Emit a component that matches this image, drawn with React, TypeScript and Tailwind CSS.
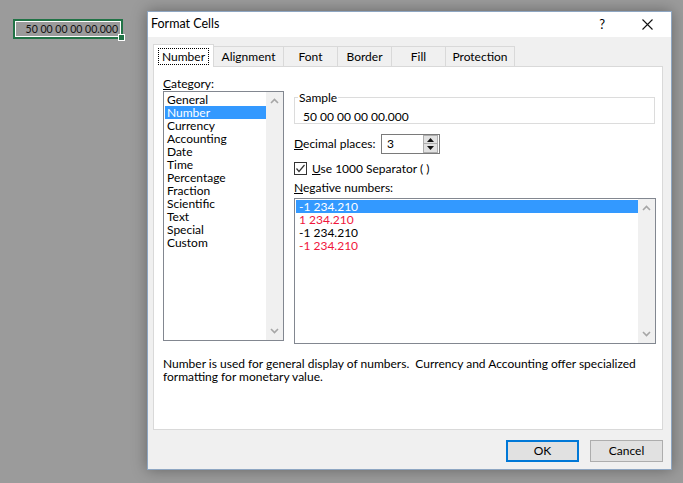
import React from 'react';

const categories = [
    'General', 'Number', 'Currency', 'Accounting', 'Date', 'Time',
    'Percentage', 'Fraction', 'Scientific', 'Text', 'Special', 'Custom'
];

const negatives = [
    { text: '-1 234.210', red: false },
    { text: '1 234.210', red: true },
    { text: '-1 234.210', red: false },
    { text: '-1 234.210', red: true }
];

const tabs = [
    { label: 'Number', w: 'w-[61px]' },
    { label: 'Alignment', w: 'w-[70px]' },
    { label: 'Font', w: 'w-[54px]' },
    { label: 'Border', w: 'w-[54px]' },
    { label: 'Fill', w: 'w-[54px]' },
    { label: 'Protection', w: 'w-[69px]' }
];

function Chevron({ up }: { up?: boolean }) {
    return (
        <svg width="9" height="6" viewBox="0 0 9 6">
            <polyline
                points={up ? '1,5 4.5,1.5 8,5' : '1,1 4.5,4.5 8,1'}
                fill="none"
                stroke="#a6a6a6"
                strokeWidth="1.6"
            />
        </svg>
    );
}

function ScrollBar() {
    return (
        <div className="w-[17px] h-full bg-[#f0f0f0] flex flex-col justify-between items-center pt-[6px] pb-[6px]">
            <Chevron up />
            <Chevron />
        </div>
    );
}

function Cell() {
    return (
        <div className="relative ml-[13px] mt-[19px] w-[110px] h-[20px] border-2 border-[#217346]">
            <div className="w-full h-full border border-white flex items-center justify-end pr-[2px] text-[10.5px] text-[#111] leading-none whitespace-nowrap">
                50 00 00 00 00.000
            </div>
            <div className="absolute -right-[4px] -bottom-[4px] w-[7px] h-[7px] bg-[#217346] border border-white" />
        </div>
    );
}

export default function App() {
    return (
        <div
            className="w-[683px] h-[483px] bg-[#9b9b9b] flex items-start overflow-hidden text-[12px] text-black"
            style={{ fontFamily: '"Segoe UI", Lato, "Noto Sans", Arial, sans-serif' }}
        >
            <Cell />

            <div className="ml-[24px] mt-[11px] w-[525px] h-[459px] border border-[#8ea6c2] bg-[#f0f0f0] flex flex-col shadow-[0_0_14px_rgba(0,0,0,0.35)]">
                {/* title bar */}
                <div className="h-[25px] bg-white flex items-center pl-[3px] pr-[18px]">
                    <span className="flex-1 text-[12.5px]">Format Cells</span>
                    <span className="text-[13px] mr-[37px]">?</span>
                    <svg width="11" height="11" viewBox="0 0 11 11">
                        <path d="M0.5 0.5 L10.5 10.5 M10.5 0.5 L0.5 10.5" stroke="#111" strokeWidth="1.1" />
                    </svg>
                </div>

                <div className="flex-1 flex flex-col pl-[5px] pr-[8px] pt-[7px]">
                    {/* tabs */}
                    <div className="flex items-end h-[22px]">
                        {tabs.map((t, i) =>
                            i === 0 ? (
                                <div
                                    key={t.label}
                                    className={`${t.w} h-[23px] -mb-px relative z-10 bg-white border border-b-0 border-[#d9d9d9] flex items-center justify-center`}
                                >
                                    <span className="px-[3px] leading-[15px] border border-dotted border-black">{t.label}</span>
                                </div>
                            ) : (
                                <div
                                    key={t.label}
                                    className={`${t.w} h-[20px] bg-[#f0f0f0] border border-l-0 border-b-0 border-[#d9d9d9] flex items-center justify-center`}
                                >
                                    {t.label}
                                </div>
                            )
                        )}
                    </div>

                    {/* panel */}
                    <div className="w-[510px] h-[364px] bg-white border border-[#d9d9d9] flex flex-col pl-[9px] pt-[9px]">
                        <div className="flex items-start gap-[10px]">
                            <div className="w-[121px] flex flex-col">
                                <div className="h-[15px] leading-[15px]">
                                    <span className="underline">C</span>ategory:
                                </div>
                                <div className="h-[250px] border border-[#828790] flex">
                                    <div className="flex-1 pl-px pt-px">
                                        {categories.map((c) => (
                                            <div
                                                key={c}
                                                className={`h-[13px] leading-[13px] pl-[2px] ${c === 'Number' ? 'bg-[#3399ff] text-white' : ''}`}
                                            >
                                                {c}
                                            </div>
                                        ))}
                                    </div>
                                    <ScrollBar />
                                </div>
                            </div>

                            <div className="w-[362px] flex flex-col pt-[21px]">
                                <div className="h-[27px] w-[361px] border border-[#dcdcdc] flex flex-col">
                                    <span className="-mt-[8px] ml-[3px] px-px w-fit bg-white leading-[15px]">Sample</span>
                                    <span className="mt-[4px] pl-[8px] leading-[15px]">50 00 00 00 00.000</span>
                                </div>

                                <div className="mt-[10px] flex items-center h-[20px]">
                                    <span className="w-[87px] whitespace-nowrap">
                                        <span className="underline">D</span>ecimal places:
                                    </span>
                                    <div className="w-[59px] h-[20px] border border-[#7a7a7a] flex items-center">
                                        <span className="flex-1 pl-[5px]">3</span>
                                        <div className="w-[15px] h-[18px] mr-px flex flex-col">
                                            <div className="h-[9px] bg-[#e1e1e1] border border-[#adadad] flex items-center justify-center">
                                                <svg width="7" height="4" viewBox="0 0 7 4">
                                                    <polygon points="0,4 3.5,0 7,4" fill="#111" />
                                                </svg>
                                            </div>
                                            <div className="h-[9px] bg-[#e1e1e1] border border-t-0 border-[#adadad] flex items-center justify-center">
                                                <svg width="7" height="4" viewBox="0 0 7 4">
                                                    <polygon points="0,0 3.5,4 7,0" fill="#111" />
                                                </svg>
                                            </div>
                                        </div>
                                    </div>
                                </div>

                                <div className="mt-[8px] h-[13px] flex items-center">
                                    <div className="w-[13px] h-[13px] border border-[#333] flex items-center justify-center">
                                        <svg width="11" height="11" viewBox="0 0 11 11">
                                            <polyline points="1.5,5.5 4,8.5 9.5,2" fill="none" stroke="#333" strokeWidth="1.2" />
                                        </svg>
                                    </div>
                                    <span className="ml-[5px] whitespace-nowrap">
                                        <span className="underline">U</span>se 1000 Separator ( )
                                    </span>
                                </div>

                                <div className="mt-[5px] h-[15px] leading-[15px]">
                                    <span className="underline">N</span>egative numbers:
                                </div>

                                <div className="mt-[3px] h-[146px] w-[362px] border border-[#828790] flex">
                                    <div className="flex-1 pl-px pt-px">
                                        {negatives.map((n, i) => (
                                            <div
                                                key={i}
                                                className={`h-[13px] leading-[13px] pl-[3px] ${
                                                    i === 0 ? 'bg-[#3399ff] text-white' : n.red ? 'text-[#f0163c]' : ''
                                                }`}
                                            >
                                                {n.text}
                                            </div>
                                        ))}
                                    </div>
                                    <ScrollBar />
                                </div>
                            </div>
                        </div>

                        <div className="mt-[13px] leading-[13px] whitespace-nowrap">
                            <div>Number is used for general display of numbers.&nbsp; Currency and Accounting offer specialized</div>
                            <div>formatting for monetary value.</div>
                        </div>
                    </div>

                    {/* buttons */}
                    <div className="mt-[10px] flex justify-end gap-[11px] w-[510px]">
                        <button className="w-[73px] h-[22px] bg-[#e1e1e1] border-2 border-[#0078d7]">OK</button>
                        <button className="w-[73px] h-[22px] bg-[#e1e1e1] border border-[#adadad]">Cancel</button>
                    </div>
                </div>
            </div>
        </div>
    );
}
